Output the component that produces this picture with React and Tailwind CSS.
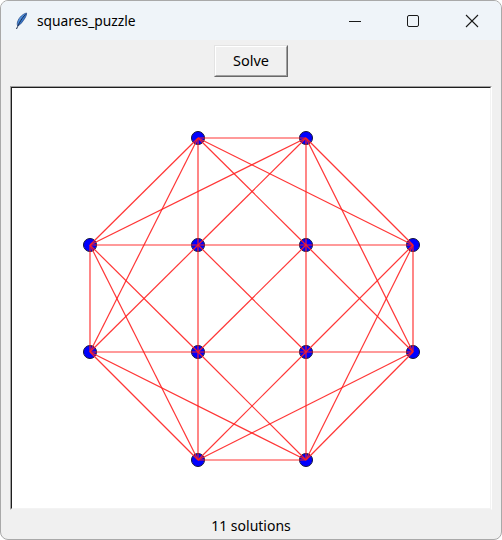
import React from "react";

const XS = [90, 198, 306, 413];
const YS = [138, 245, 352, 460];

function buildGraph() {
  const pts = [];
  for (let r = 0; r < 4; r++)
    for (let c = 0; c < 4; c++) {
      if ((r === 0 || r === 3) && (c === 0 || c === 3)) continue;
      pts.push([r, c]);
    }
  const has = (r, c) => pts.some((p) => p[0] === r && p[1] === c);
  const squares = new Map();
  for (const p of pts)
    for (const q of pts) {
      if (p === q) continue;
      const dr = q[0] - p[0];
      const dc = q[1] - p[1];
      const w = [-dc, dr];
      const a = [q[0] + w[0], q[1] + w[1]];
      const b = [p[0] + w[0], p[1] + w[1]];
      if (has(a[0], a[1]) && has(b[0], b[1])) {
        const verts = [p, q, a, b];
        const key = verts
          .map((v) => v[0] * 4 + v[1])
          .sort((x, y) => x - y)
          .join(",");
        if (!squares.has(key)) squares.set(key, verts);
      }
    }
  const edges = new Map();
  for (const verts of squares.values()) {
    for (let i = 0; i < 4; i++) {
      const u = verts[i];
      const v = verts[(i + 1) % 4];
      const ku = u[0] * 4 + u[1];
      const kv = v[0] * 4 + v[1];
      const key = Math.min(ku, kv) + "-" + Math.max(ku, kv);
      edges.set(key, [u, v]);
    }
  }
  return { pts, edges: [...edges.values()] };
}

const { pts, edges } = buildGraph();

function Feather() {
  return (
    <svg width="14" height="18" viewBox="0 0 14 18">
      <defs>
        <linearGradient id="fg" x1="0" y1="0" x2="1" y2="1">
          <stop offset="0" stopColor="#9fd0ff" />
          <stop offset="0.5" stopColor="#3a7fd6" />
          <stop offset="1" stopColor="#1b3f8a" />
        </linearGradient>
      </defs>
      <path
        d="M12.5 1 C9 2 5 5 3.5 10 C3 12 3.3 13.5 4 14 C6 13 9 9.5 11 6 C12.3 3.8 12.8 2.2 12.5 1 Z"
        fill="url(#fg)"
        stroke="#1d3d7a"
        strokeWidth="0.7"
      />
      <path d="M11.5 2.5 C8 6 5.5 10 2.5 17" stroke="#1a2a4a" strokeWidth="1" fill="none" />
    </svg>
  );
}

export default function App() {
  const font = { fontFamily: '"Noto Sans", "Open Sans", Arial, sans-serif' };
  return (
    <div className="w-[502px] h-[540px] overflow-hidden" style={font}>
      <div className="w-[502px] h-[540px] flex flex-col border border-[#a9a9a9] rounded-[8px] overflow-hidden bg-[#f0f0f0]">
        {/* title bar */}
        <div className="h-[39px] shrink-0 bg-[#eff4f9] flex items-center">
          <div className="w-[13px] shrink-0" />
          <Feather />
          <span className="ml-[9px] text-[13.8px] text-black leading-none pt-[1px]">squares_puzzle</span>
          <div className="flex-1" />
          <div className="w-[46px] h-[39px] flex items-center justify-center">
            <svg width="14" height="14" viewBox="0 0 14 14">
              <line x1="1" y1="7.5" x2="13" y2="7.5" stroke="#1a1a1a" strokeWidth="1" />
            </svg>
          </div>
          <div className="w-[12px]" />
          <div className="w-[46px] h-[39px] flex items-center justify-center">
            <svg width="14" height="14" viewBox="0 0 14 14">
              <rect x="1.5" y="1.5" width="11" height="11" rx="1.5" fill="none" stroke="#1a1a1a" strokeWidth="1" />
            </svg>
          </div>
          <div className="w-[13px]" />
          <div className="w-[46px] h-[39px] flex items-center justify-center">
            <svg width="14" height="14" viewBox="0 0 14 14">
              <line x1="1" y1="1" x2="13" y2="13" stroke="#1a1a1a" strokeWidth="1.1" />
              <line x1="13" y1="1" x2="1" y2="13" stroke="#1a1a1a" strokeWidth="1.1" />
            </svg>
          </div>
          <div className="w-[6px]" />
        </div>

        {/* body */}
        <div className="flex-1 flex flex-col items-center pt-[5px]">
          <div className="w-[74px] h-[32px] border-t border-l border-[#e3e3e3] border-r-[#696969] border-b-[#696969] border-r border-b">
            <div className="w-full h-full border-t border-l border-white border-r border-b border-r-[#a0a0a0] border-b-[#a0a0a0] flex items-center justify-center text-[14.5px] text-black">
              Solve
            </div>
          </div>

          <div className="mt-[9px] w-[482px] h-[424px] border-t border-l border-[#a0a0a0] border-r border-b border-r-white border-b-[#f0f0f0]">
            <div className="w-full h-full border-t border-l border-[#1e1e1e] border-r border-b border-r-[#f3f3f3] border-b-[#f3f3f3] bg-white">
              <svg width="478" height="420" viewBox="12 88 478 420" className="block">
                {pts.map(([r, c]) => (
                  <circle
                    key={r + "_" + c}
                    cx={XS[c]}
                    cy={YS[r]}
                    r="6.5"
                    fill="#0000ff"
                    stroke="#14143a"
                    strokeWidth="1"
                  />
                ))}
                {edges.map(([u, v], i) => (
                  <line
                    key={i}
                    x1={XS[u[1]]}
                    y1={YS[u[0]]}
                    x2={XS[v[1]]}
                    y2={YS[v[0]]}
                    stroke="#ff2020"
                    strokeWidth="1.2"
                    strokeOpacity="0.9"
                  />
                ))}
              </svg>
            </div>
          </div>

          <div className="flex-1 flex items-center justify-center text-[14px] text-black pt-[1px]">
            11 solutions
          </div>
        </div>
      </div>
    </div>
  );
}
